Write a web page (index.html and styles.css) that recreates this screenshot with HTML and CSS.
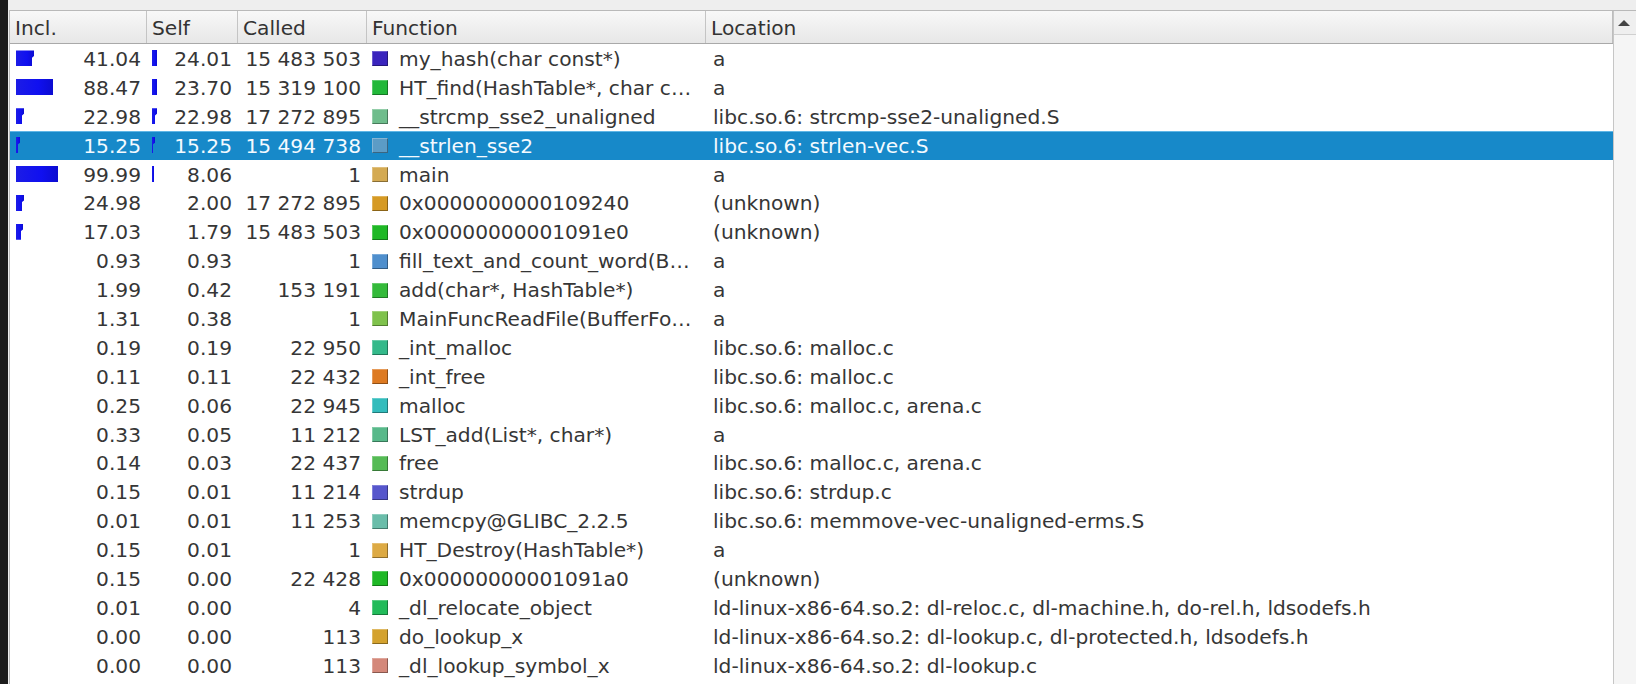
FILE: index.html
```html
<!DOCTYPE html>
<html>
<head>
<meta charset="utf-8">
<link rel="stylesheet" href="styles.css">
</head>
<body>
<div class="strip"></div>
<div class="app">
  <div class="frame">
    <div class="view">
      <div class="row head">
        <div class="hc">Incl.</div>
        <div class="hc">Self</div>
        <div class="hc">Called</div>
        <div class="hc">Function</div>
        <div class="hc last">Location</div>
      </div>
      <div class="rows">
        <div class="row"><div class="c num"><span class="bar tip" style="width:18px"></span>41.04</div><div class="c num"><span class="sbar" style="width:5px"></span>24.01</div><div class="c num">15 483 503</div><div class="c fn"><span class="sq" style="--c:#3a24bd"></span>my_hash(char const*)</div><div class="c loc">a</div></div>
        <div class="row"><div class="c num"><span class="bar" style="width:37px"></span>88.47</div><div class="c num"><span class="sbar" style="width:5px"></span>23.70</div><div class="c num">15 319 100</div><div class="c fn"><span class="sq" style="--c:#22b83a"></span>HT_find(HashTable*, char c…</div><div class="c loc">a</div></div>
        <div class="row"><div class="c num"><span class="bar tip" style="width:8px"></span>22.98</div><div class="c num"><span class="sbar tip" style="width:5px"></span>22.98</div><div class="c num">17 272 895</div><div class="c fn"><span class="sq" style="--c:#6fbd8c"></span>__strcmp_sse2_unaligned</div><div class="c loc">libc.so.6: strcmp-sse2-unaligned.S</div></div>
        <div class="row sel"><div class="c num"><span class="bar tip" style="width:4px"></span>15.25</div><div class="c num"><span class="sbar tip" style="width:3px"></span>15.25</div><div class="c num">15 494 738</div><div class="c fn"><span class="sq" style="--c:#5c9cc6"></span>__strlen_sse2</div><div class="c loc">libc.so.6: strlen-vec.S</div></div>
        <div class="row"><div class="c num"><span class="bar" style="width:42px"></span>99.99</div><div class="c num"><span class="sbar" style="width:2px"></span>8.06</div><div class="c num">1</div><div class="c fn"><span class="sq" style="--c:#d4aa52"></span>main</div><div class="c loc">a</div></div>
        <div class="row"><div class="c num"><span class="bar tip" style="width:8px"></span>24.98</div><div class="c num">2.00</div><div class="c num">17 272 895</div><div class="c fn"><span class="sq" style="--c:#d69a24"></span>0x0000000000109240</div><div class="c loc">(unknown)</div></div>
        <div class="row"><div class="c num"><span class="bar tip" style="width:7px"></span>17.03</div><div class="c num">1.79</div><div class="c num">15 483 503</div><div class="c fn"><span class="sq" style="--c:#1fb826"></span>0x00000000001091e0</div><div class="c loc">(unknown)</div></div>
        <div class="row"><div class="c num">0.93</div><div class="c num">0.93</div><div class="c num">1</div><div class="c fn"><span class="sq" style="--c:#4f8fcd"></span>fill_text_and_count_word(B…</div><div class="c loc">a</div></div>
        <div class="row"><div class="c num">1.99</div><div class="c num">0.42</div><div class="c num">153 191</div><div class="c fn"><span class="sq" style="--c:#34ba3a"></span>add(char*, HashTable*)</div><div class="c loc">a</div></div>
        <div class="row"><div class="c num">1.31</div><div class="c num">0.38</div><div class="c num">1</div><div class="c fn"><span class="sq" style="--c:#7fc24c"></span>MainFuncReadFile(BufferFo…</div><div class="c loc">a</div></div>
        <div class="row"><div class="c num">0.19</div><div class="c num">0.19</div><div class="c num">22 950</div><div class="c fn"><span class="sq" style="--c:#34b98a"></span>_int_malloc</div><div class="c loc">libc.so.6: malloc.c</div></div>
        <div class="row"><div class="c num">0.11</div><div class="c num">0.11</div><div class="c num">22 432</div><div class="c fn"><span class="sq" style="--c:#dd7a22"></span>_int_free</div><div class="c loc">libc.so.6: malloc.c</div></div>
        <div class="row"><div class="c num">0.25</div><div class="c num">0.06</div><div class="c num">22 945</div><div class="c fn"><span class="sq" style="--c:#33bcbc"></span>malloc</div><div class="c loc">libc.so.6: malloc.c, arena.c</div></div>
        <div class="row"><div class="c num">0.33</div><div class="c num">0.05</div><div class="c num">11 212</div><div class="c fn"><span class="sq" style="--c:#58b98a"></span>LST_add(List*, char*)</div><div class="c loc">a</div></div>
        <div class="row"><div class="c num">0.14</div><div class="c num">0.03</div><div class="c num">22 437</div><div class="c fn"><span class="sq" style="--c:#55bb55"></span>free</div><div class="c loc">libc.so.6: malloc.c, arena.c</div></div>
        <div class="row"><div class="c num">0.15</div><div class="c num">0.01</div><div class="c num">11 214</div><div class="c fn"><span class="sq" style="--c:#5656cc"></span>strdup</div><div class="c loc">libc.so.6: strdup.c</div></div>
        <div class="row"><div class="c num">0.01</div><div class="c num">0.01</div><div class="c num">11 253</div><div class="c fn"><span class="sq" style="--c:#6abdaa"></span>memcpy@GLIBC_2.2.5</div><div class="c loc">libc.so.6: memmove-vec-unaligned-erms.S</div></div>
        <div class="row"><div class="c num">0.15</div><div class="c num">0.01</div><div class="c num">1</div><div class="c fn"><span class="sq" style="--c:#ddaa44"></span>HT_Destroy(HashTable*)</div><div class="c loc">a</div></div>
        <div class="row"><div class="c num">0.15</div><div class="c num">0.00</div><div class="c num">22 428</div><div class="c fn"><span class="sq" style="--c:#1fb826"></span>0x00000000001091a0</div><div class="c loc">(unknown)</div></div>
        <div class="row"><div class="c num">0.01</div><div class="c num">0.00</div><div class="c num">4</div><div class="c fn"><span class="sq" style="--c:#22bb5a"></span>_dl_relocate_object</div><div class="c loc">ld-linux-x86-64.so.2: dl-reloc.c, dl-machine.h, do-rel.h, ldsodefs.h</div></div>
        <div class="row"><div class="c num">0.00</div><div class="c num">0.00</div><div class="c num">113</div><div class="c fn"><span class="sq" style="--c:#d4a22e"></span>do_lookup_x</div><div class="c loc">ld-linux-x86-64.so.2: dl-lookup.c, dl-protected.h, ldsodefs.h</div></div>
        <div class="row"><div class="c num">0.00</div><div class="c num">0.00</div><div class="c num">113</div><div class="c fn"><span class="sq" style="--c:#d4887a"></span>_dl_lookup_symbol_x</div><div class="c loc">ld-linux-x86-64.so.2: dl-lookup.c</div></div>
        <div class="row"><div class="c num">0.00</div><div class="c num">0.00</div><div class="c num">112</div><div class="c fn"><span class="sq" style="--c:#b97ad4"></span>check_match</div><div class="c loc">ld-linux-x86-64.so.2: dl-lookup.c</div></div>
      </div>
    </div>
    <div class="scroll">
      <div class="sbtn"><span class="arrow"></span></div>
      <div class="track"></div>
    </div>
  </div>
</div>
</body>
</html>
```

FILE: styles.css
```css
html, body {
  margin: 0;
  padding: 0;
  height: 684px;
  overflow: hidden;
}
body {
  display: flex;
  background: #1b1b1b;
  font-family: "DejaVu Sans", "Liberation Sans", sans-serif;
  font-size: 20.2px;
  color: #363636;
}
.strip {
  width: 8px;
  flex: none;
}
.app {
  flex: 1;
  background: #eeeeee;
  padding: 10px 0 0 1px;
  display: flex;
  flex-direction: column;
  min-width: 0;
}
.frame {
  flex: 1;
  display: flex;
  border-top: 1px solid #b9b9b9;
  border-left: 1px solid #b9b9b9;
  background: #ffffff;
  min-height: 0;
  overflow: hidden;
}
.view {
  flex: 1;
  min-width: 0;
  display: flex;
  flex-direction: column;
}
.row {
  display: grid;
  grid-template-columns: 137px 91px 129px 339px 1fr;
  height: 28.9px;
  align-items: center;
  white-space: nowrap;
}
.head {
  height: 32px;
  flex: none;
  background: linear-gradient(#f8f8f8, #e7e7e7);
  border-bottom: 1px solid #a9a9a9;
  align-items: stretch;
}
.hc {
  border-right: 1px solid #c4c4c4;
  padding-left: 5px;
  padding-top: 1px;
  display: flex;
  align-items: center;
  color: #333333;
}
.hc.last {
  border-right: 1px solid #bdbdbd;
}
.rows {
  flex: 1;
  overflow: hidden;
  padding-top: 0.5px;
}
.c {
  overflow: hidden;
}
.num {
  display: flex;
  align-items: center;
  justify-content: flex-end;
  padding-right: 6px;
  position: relative;
}
.bar, .sbar {
  position: absolute;
  top: 50%;
  height: 16px;
  margin-top: -8.5px;
  background: linear-gradient(90deg, #1c1ce6, #1010f0 60%, #0c0cd0);
}
.tip {
  clip-path: polygon(0 0, 100% 0, 100% 35%, calc(100% - 2px) 45%, calc(100% - 2px) 100%, 0 100%);
}
.bar {
  left: 6px;
}
.sbar {
  left: 5px;
}
.fn {
  display: flex;
  align-items: center;
  padding-left: 5px;
}
.sq {
  width: 16px;
  height: 15px;
  box-sizing: border-box;
  flex: none;
  margin-right: 11px;
  background: var(--c);
  border: 1px solid rgba(0, 0, 0, 0.35);
  border-top-color: rgba(255, 255, 255, 0.25);
  border-left-color: rgba(255, 255, 255, 0.25);
}
.loc {
  padding-left: 7px;
}
.sel {
  background: #1789c9;
  color: #f4faff;
  box-shadow: inset 0 1px 0 #5fb6e6;
}
.scroll {
  width: 22px;
  flex: none;
  border-left: 1px solid #c6c6c6;
  background: #f3f3f3;
  display: flex;
  flex-direction: column;
}
.sbtn {
  height: 23px;
  border-bottom: 1px solid #d0d0d0;
  background: #efefef;
  display: flex;
  align-items: center;
  justify-content: center;
}
.arrow {
  width: 0;
  height: 0;
  border-left: 6px solid transparent;
  border-right: 6px solid transparent;
  border-bottom: 6px solid #444444;
  margin-left: -2px;
}
.track {
  flex: 1;
  background: #f5f5f5;
}
```
